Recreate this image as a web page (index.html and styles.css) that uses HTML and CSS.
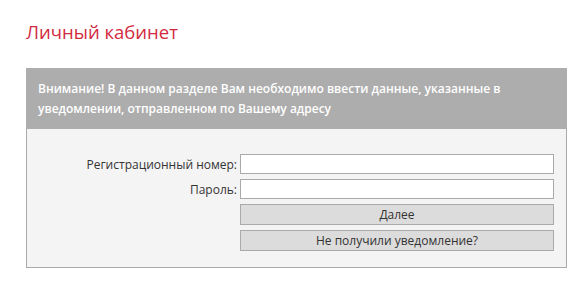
FILE: index.html
```html
<!DOCTYPE html>
<html lang="ru">
<head>
  <meta charset="utf-8">
  <title>Личный кабинет</title>
  <link rel="stylesheet" href="styles.css">
</head>
<body>
  <div class="page">
    <h1>Личный кабинет</h1>
    <div class="login-box">
      <div class="login-notice">
        Внимание! В данном разделе Вам необходимо ввести данные, указанные в уведомлении, отправленном по Вашему адресу
      </div>
      <form class="login-form" onsubmit="return false;">
        <label for="regnum">Регистрационный номер:</label>
        <input type="text" id="regnum">
        <label for="password">Пароль:</label>
        <input type="password" id="password">
        <span></span>
        <button type="submit">Далее</button>
        <span></span>
        <button type="button">Не получили уведомление?</button>
      </form>
    </div>
  </div>
</body>
</html>
```

FILE: styles.css
```css
body {
  margin: 0;
  padding: 0;
  font-family: "Open Sans", Arial, sans-serif;
  background-color: #fff;
  color: #333;
}

.page {
  padding: 0 26px;
}

h1 {
  margin: 18px 0 23px;
  font-size: 18.5px;
  line-height: 27px;
  font-weight: normal;
  color: #d22b3f;
}

.login-box {
  width: 541px;
}

.login-notice {
  background-color: #adadad;
  color: #fff;
  font-size: 12px;
  font-weight: 600;
  line-height: 19.5px;
  padding: 11px 12px 11px;
}

.login-form {
  display: grid;
  grid-template-columns: 1fr 314px;
  column-gap: 3px;
  row-gap: 5px;
  align-items: center;
  padding: 25px 12px 16px;
  background-color: #f4f4f5;
  border: 1px solid #aaa;
  border-top: none;
}

.login-form label {
  text-align: right;
  font-size: 12px;
  color: #333;
}

.login-form input {
  box-sizing: border-box;
  height: 20px;
  width: 100%;
  margin: 0;
  padding: 0 4px;
  border: 1px solid #aaa;
  background-color: #fff;
  font-family: inherit;
  font-size: 12px;
}

.login-form button {
  box-sizing: border-box;
  height: 21px;
  width: 100%;
  margin: 0;
  padding: 0;
  border: 1px solid #aaa;
  background-color: #dcdcdc;
  color: #333;
  font-family: inherit;
  font-size: 12px;
  cursor: pointer;
}
```
